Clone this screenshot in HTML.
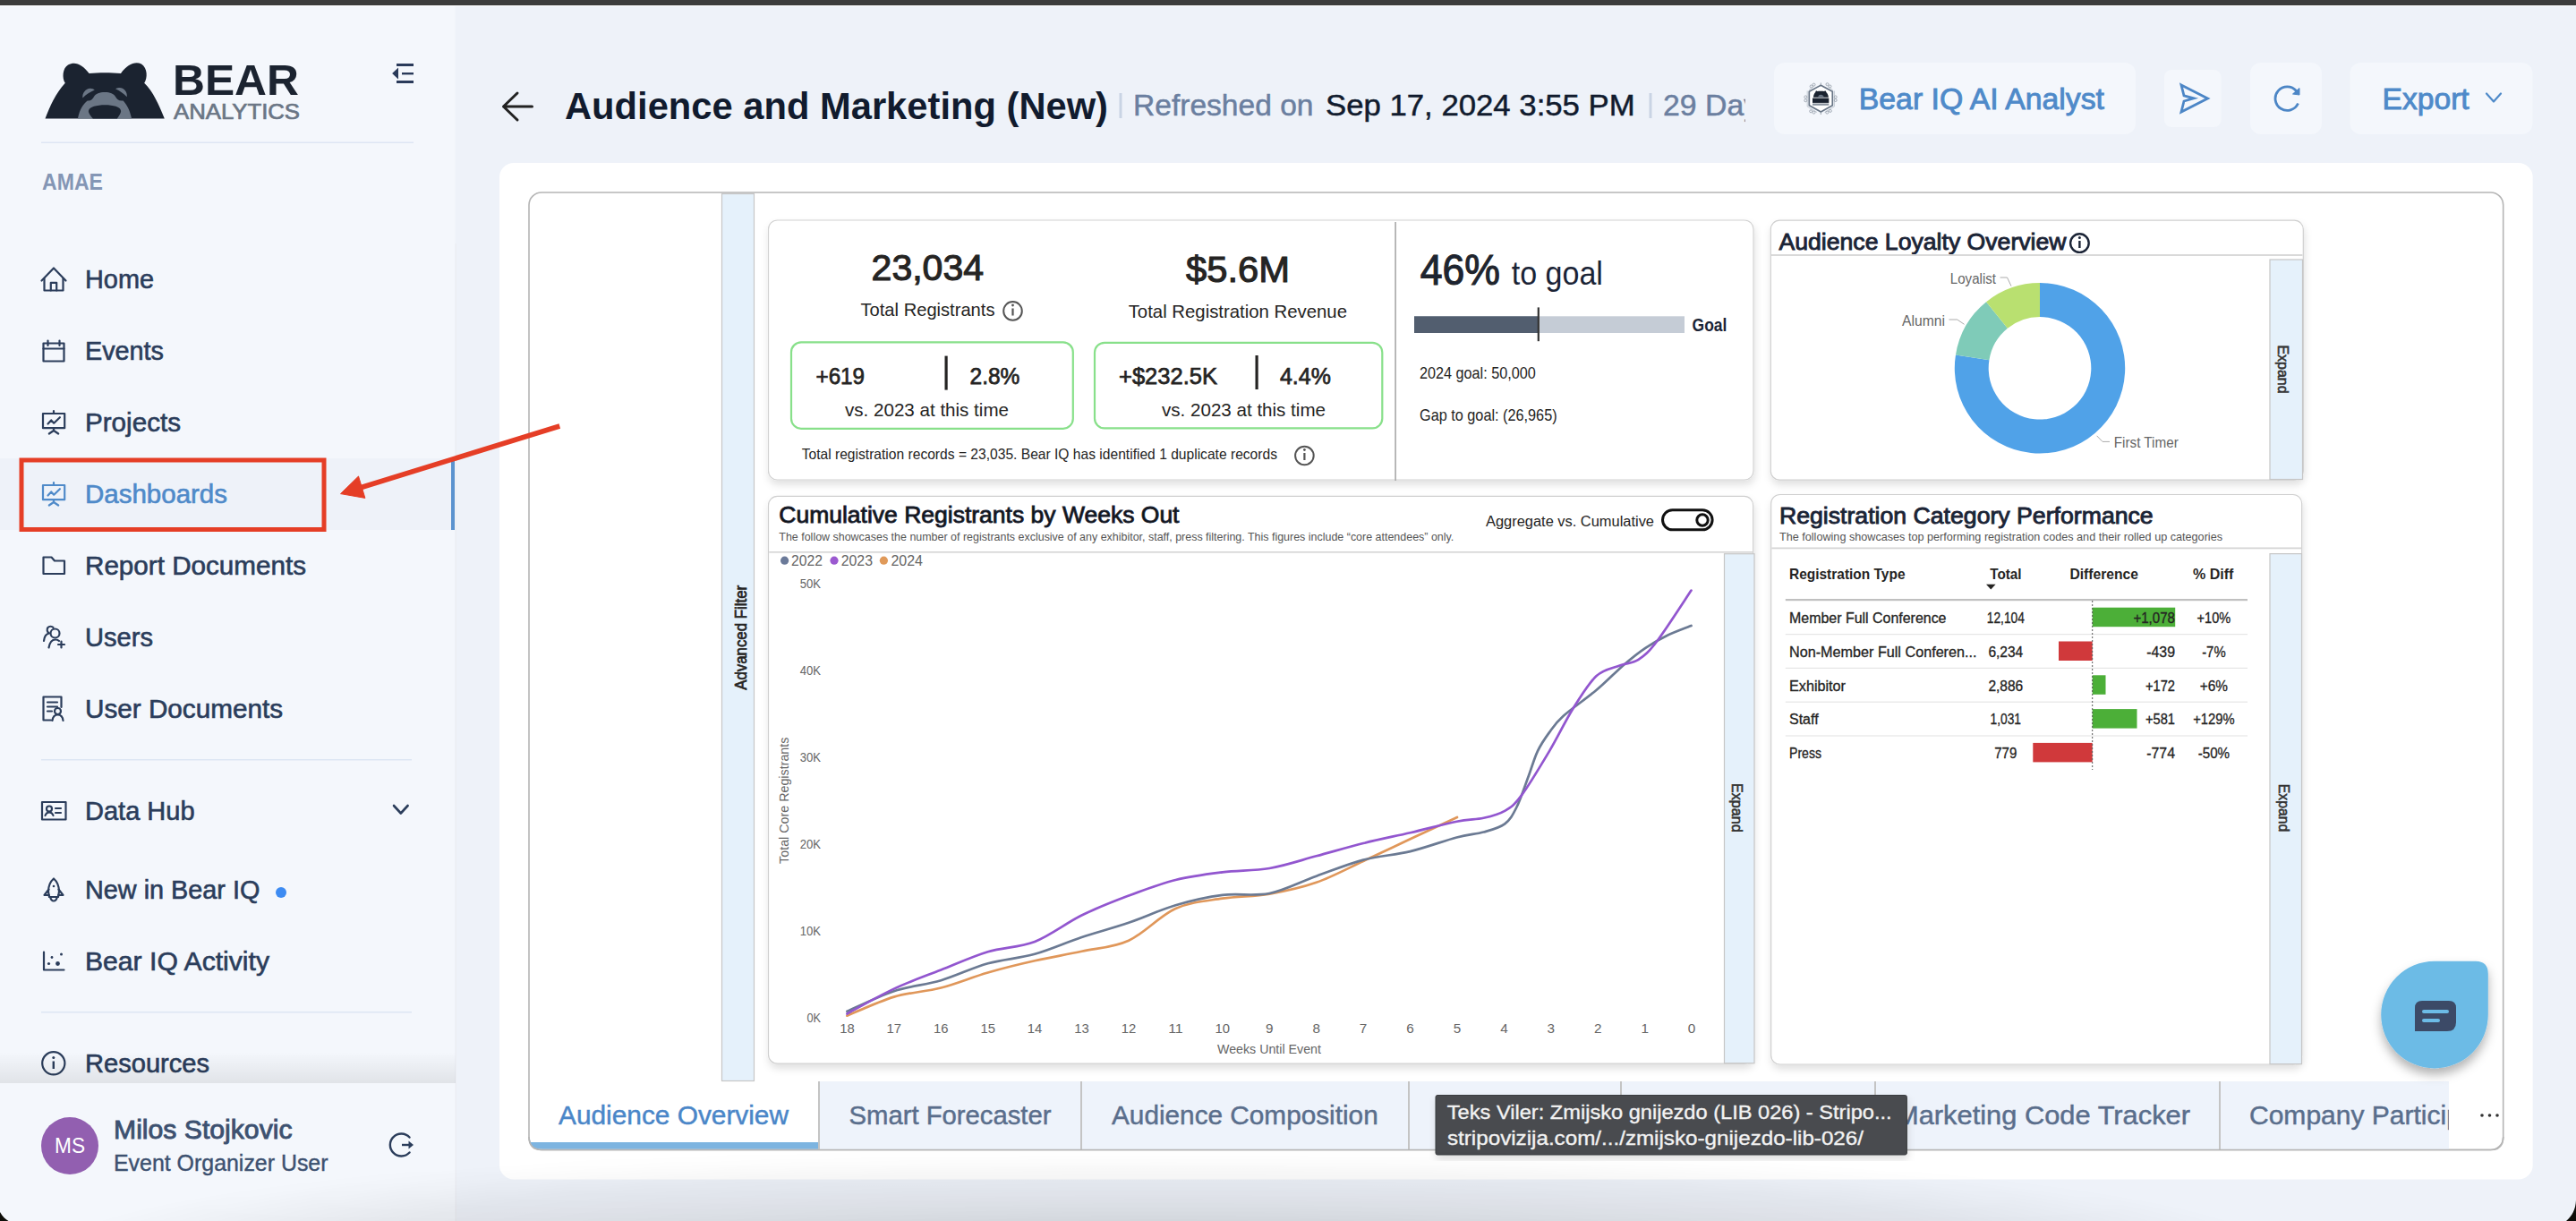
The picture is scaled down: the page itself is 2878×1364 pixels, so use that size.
<!DOCTYPE html>
<html><head><meta charset="utf-8"><title>Audience and Marketing (New)</title>
<style>
html,body{margin:0;padding:0;width:2878px;height:1364px;overflow:hidden;background:#eef2f9}
svg{display:block}
text{font-family:"Liberation Sans", sans-serif}
</style></head><body>
<svg width="2878" height="1364" viewBox="0 0 2878 1364">
<defs>
<filter id="sh" x="-5%" y="-5%" width="110%" height="115%"><feDropShadow dx="1" dy="5" stdDeviation="4" flood-color="#000" flood-opacity="0.12"/></filter>
<filter id="sh2" x="-20%" y="-20%" width="140%" height="150%"><feDropShadow dx="0" dy="7" stdDeviation="6" flood-color="#000" flood-opacity="0.3"/></filter>
<radialGradient id="botg" gradientUnits="userSpaceOnUse" cx="1300" cy="1400" r="1250" gradientTransform="translate(1300,1400) scale(1,0.1) translate(-1300,-1400)"><stop offset="0" stop-color="#000" stop-opacity="0.14"/><stop offset="0.75" stop-color="#000" stop-opacity="0.06"/><stop offset="1" stop-color="#000" stop-opacity="0"/></radialGradient>
<linearGradient id="sideg" x1="0" y1="0" x2="0" y2="1"><stop offset="0" stop-color="#000" stop-opacity="0"/><stop offset="1" stop-color="#000" stop-opacity="0.08"/></linearGradient>
<linearGradient id="vfade" x1="0" y1="0" x2="0" y2="1"><stop offset="0" stop-color="#fff" stop-opacity="0"/><stop offset="0.35" stop-color="#fff" stop-opacity="0.5"/><stop offset="1" stop-color="#fff" stop-opacity="1"/></linearGradient><mask id="vmask" maskUnits="userSpaceOnUse" x="0" y="1280" width="2878" height="84"><rect x="0" y="1280" width="2878" height="84" fill="url(#vfade)"/></mask>
<clipPath id="clipDay"><rect x="1850" y="80" width="100" height="80"/></clipPath>
<clipPath id="clipComp"><rect x="2482" y="1208" width="254" height="77"/></clipPath>
</defs>

<rect x="0" y="0" width="2878" height="1364" fill="#eef2f9"/>
<rect x="0" y="0" width="508.5" height="1364" fill="#f4f7fc"/>
<rect x="508.5" y="272" width="1.5" height="1092" fill="#eceef3"/>
<rect x="0" y="0" width="2878" height="6" fill="#3c3c3c"/>
<rect x="0" y="6" width="2878" height="1" fill="#ffffff"/>
<g transform="translate(40,60)">
<path fill="#1b2330" d="M10.5,72.6 C16,58 22,45 32.8,32.8 C29,27 30,16 36,12.5 C44,8 52,12 59.6,22 C70,21 84,21 95,22 C102,12 111,8 118,11.5 C125,16 125,27 121.2,32.8 C131,42 138,58 143.8,72.6 Z"/>
<path fill="#6b7685" d="M46.9,72.6 C49,62 53,56 57.7,52.4 C61,53 63.5,51 65,48 C67,44.5 71,43 77.3,43 C83,43 87,44.5 89,48 C90.5,51 93,53 97.6,52.4 C101,56 105,62 107.1,72.6 Z"/>
<path fill="#6b7685" d="M52.4,49.5 C51.5,44 56,38.5 61,38.7 C63,38.8 65,39.5 65.8,40.6 C60,43 56,46 52.4,49.5 Z"/>
<path fill="#6b7685" d="M101.8,48.2 C102.5,42 98,37.5 93,37.9 C91,38 89.5,38.6 89,39.3 C94,41.5 98,44.5 101.8,48.2 Z"/>
<path fill="#1b2330" d="M63.9,72.6 C60,68 58.5,65.5 59,63.5 C60,59.5 68,57.3 77.3,57.3 C86.5,57.3 94.5,59.5 95,63.5 C95.5,65.5 94,68 90.8,72.6 Z"/>
</g>
<text x="193.0" y="106.0" font-size="48.9" fill="#1b2330" font-weight="bold" textLength="141.0" lengthAdjust="spacingAndGlyphs">BEAR</text>
<text x="194.0" y="133.0" font-size="24.4" fill="#6b7685" textLength="141.0" lengthAdjust="spacingAndGlyphs" stroke="#6b7685" stroke-width="0.7">ANALYTICS</text>
<g fill="#2a3a5a"><rect x="443" y="71" width="19" height="3"/><rect x="449" y="81" width="13" height="2.4"/><rect x="443" y="90" width="19" height="3"/><path d="M438.1,82 L445,75.5 L445,88.4 Z"/></g>
<rect x="46" y="158.5" width="416" height="1.5" fill="#dde6f4"/>
<text x="47.0" y="212.0" font-size="25.1" fill="#8496b5" font-weight="bold" textLength="68.0" lengthAdjust="spacingAndGlyphs">AMAE</text>
<rect x="0" y="512" width="508" height="80" fill="#eef2f9"/>
<rect x="504" y="515" width="4" height="77" fill="#5b93cf"/>
<text x="95.0" y="322.0" font-size="28.6" fill="#2b3d5b" textLength="77.0" lengthAdjust="spacingAndGlyphs" stroke="#2b3d5b" stroke-width="0.6">Home</text>
<text x="95.0" y="402.0" font-size="28.6" fill="#2b3d5b" textLength="88.0" lengthAdjust="spacingAndGlyphs" stroke="#2b3d5b" stroke-width="0.6">Events</text>
<text x="95.0" y="482.0" font-size="28.6" fill="#2b3d5b" textLength="107.0" lengthAdjust="spacingAndGlyphs" stroke="#2b3d5b" stroke-width="0.6">Projects</text>
<text x="95.0" y="562.0" font-size="28.6" fill="#4f8ac9" textLength="159.0" lengthAdjust="spacingAndGlyphs" stroke="#4f8ac9" stroke-width="0.6">Dashboards</text>
<text x="95.0" y="642.4" font-size="28.6" fill="#2b3d5b" textLength="247.0" lengthAdjust="spacingAndGlyphs" stroke="#2b3d5b" stroke-width="0.6">Report Documents</text>
<text x="95.0" y="721.5" font-size="28.6" fill="#2b3d5b" textLength="76.0" lengthAdjust="spacingAndGlyphs" stroke="#2b3d5b" stroke-width="0.6">Users</text>
<text x="95.0" y="802.0" font-size="28.6" fill="#2b3d5b" textLength="221.0" lengthAdjust="spacingAndGlyphs" stroke="#2b3d5b" stroke-width="0.6">User Documents</text>
<text x="95.0" y="915.8" font-size="28.6" fill="#2b3d5b" textLength="122.6" lengthAdjust="spacingAndGlyphs" stroke="#2b3d5b" stroke-width="0.6">Data Hub</text>
<text x="95.0" y="1004.0" font-size="28.6" fill="#2b3d5b" textLength="195.4" lengthAdjust="spacingAndGlyphs" stroke="#2b3d5b" stroke-width="0.6">New in Bear IQ</text>
<text x="95.0" y="1084.0" font-size="28.6" fill="#2b3d5b" textLength="206.0" lengthAdjust="spacingAndGlyphs" stroke="#2b3d5b" stroke-width="0.6">Bear IQ Activity</text>
<text x="95.0" y="1198.0" font-size="28.6" fill="#2b3d5b" textLength="139.0" lengthAdjust="spacingAndGlyphs" stroke="#2b3d5b" stroke-width="0.6">Resources</text>
<g fill="none" stroke="#2b3d5b" stroke-width="2.2" stroke-linejoin="round" stroke-linecap="round"><path d="M46.5,313.5 L60,299.5 L73.5,313.5"/><path d="M49.5,311 V324.5 H70.5 V311"/><path d="M56.8,324.5 V315.8 H63.2 V324.5"/></g>
<g fill="none" stroke="#2b3d5b" stroke-width="2.2" stroke-linejoin="round" stroke-linecap="round"><rect x="48.5" y="383.5" width="23" height="20"/><path d="M48.5,389.5 H71.5"/><path d="M53.5,380.5 V386 M66.5,380.5 V386"/></g>
<g fill="none" stroke="#2b3d5b" stroke-width="2.2" stroke-linejoin="round" stroke-linecap="round" transform="translate(0,0)"><rect x="48" y="462" width="24.2" height="16.2"/><path d="M60,459 V462"/><path d="M60,478.5 V481 M54.8,484.5 L60,481 L65.2,484.5"/><path d="M53.5,473.5 L57.2,469.4 L60.2,472.7 L66.9,466.2"/></g>
<g fill="none" stroke="#4f8ac9" stroke-width="2.2" stroke-linejoin="round" stroke-linecap="round" transform="translate(0,80)"><rect x="48" y="462" width="24.2" height="16.2"/><path d="M60,459 V462"/><path d="M60,478.5 V481 M54.8,484.5 L60,481 L65.2,484.5"/><path d="M53.5,473.5 L57.2,469.4 L60.2,472.7 L66.9,466.2"/></g>
<g fill="none" stroke="#2b3d5b" stroke-width="2.2" stroke-linejoin="round" stroke-linecap="round"><path d="M48.5,622.5 H57.5 L61,626.5 H72 V641 H48.5 Z"/></g>
<g fill="none" stroke="#2b3d5b" stroke-width="2.2" stroke-linejoin="round" stroke-linecap="round" stroke-width="2"><path d="M49,716 C49.5,711 52,708 55,707.5 C52.5,706 52,703 53.5,701 C55,699.3 58,699.3 59.5,701"/><circle cx="61.5" cy="707.5" r="5"/><path d="M54.5,723.5 C55.5,717.5 58.5,714.5 62,714.5 C63.5,714.5 65,715 66,716"/><path d="M68.5,716.5 V723.5 M65,720 H72"/></g>
<g fill="none" stroke="#2b3d5b" stroke-width="2.2" stroke-linejoin="round" stroke-linecap="round" stroke-width="2"><path d="M57,804.5 H48.5 V778.5 H68.5 V790"/><path d="M53,784.5 H64 M53,789.5 H64 M53,794.5 H58"/><circle cx="64.5" cy="794.5" r="3.5"/><path d="M58.5,805 C59,800.5 61.5,798.5 64.5,798.5 C67.5,798.5 70,800.5 70.5,805"/></g>
<g fill="none" stroke="#2b3d5b" stroke-width="2.2" stroke-linejoin="round" stroke-linecap="round" stroke-width="2"><rect x="47" y="896" width="26.5" height="19.5"/><circle cx="55" cy="903.5" r="3"/><path d="M50.5,911 C51.5,908 53,907.5 55,907.5 C57,907.5 58.5,908 59.5,911"/><path d="M62,903 H68 M62,908 H68"/></g>
<g fill="none" stroke="#2b3d5b" stroke-width="2.2" stroke-linejoin="round" stroke-linecap="round" stroke-width="2"><path d="M60,981.5 C64,985 66,990 66,996 L65,1002 H55 L54,996 C54,990 56,985 60,981.5 Z"/><path d="M54.5,993.5 L49.5,1000 H55 M65.5,993.5 L70.5,1000 H65"/><path d="M56,1002 C57,1005.5 58.5,1006.5 60,1006.5 C61.5,1006.5 63,1005.5 64,1002"/></g>
<circle cx="60" cy="990" r="1.3" fill="#2b3d5b"/>
<g fill="none" stroke="#2b3d5b" stroke-width="2.2" stroke-linejoin="round" stroke-linecap="round" stroke-width="2"><path d="M49,1063.5 V1083.5 H71.5"/></g>
<g fill="#2b3d5b"><circle cx="54.5" cy="1076.5" r="1.6"/><circle cx="58" cy="1069.5" r="1.4"/><circle cx="64.5" cy="1076.5" r="2.4"/><circle cx="68.5" cy="1066" r="1.5"/></g>
<circle cx="314" cy="997" r="6" fill="#3d8bf2"/>
<path d="M440,900 L447.8,908.5 L455.6,900" fill="none" stroke="#2b3d5b" stroke-width="2.6" stroke-linecap="round" stroke-linejoin="round"/>
<rect x="46" y="848" width="414" height="1.5" fill="#dde6f4"/>
<rect x="46" y="1130" width="414" height="1.5" fill="#dde6f4"/>
<circle cx="59.8" cy="1187.8" r="12.6" fill="none" stroke="#2b3d5b" stroke-width="2.2"/>
<rect x="58.6" y="1185.5" width="2.4" height="8.5" fill="#2b3d5b"/><circle cx="59.8" cy="1181.5" r="1.5" fill="#2b3d5b"/>
<rect x="0" y="1175" width="509" height="35" fill="url(#sideg)"/>
<rect x="0" y="1210" width="509" height="154" fill="#f4f7fc"/>
<rect x="508.5" y="1210" width="1.5" height="154" fill="#eceef3"/>
<circle cx="78" cy="1280" r="32" fill="#925fb0"/>
<text x="61.0" y="1288.0" font-size="23.7" fill="#ffffff" textLength="34.0" lengthAdjust="spacingAndGlyphs">MS</text>
<text x="127.0" y="1272.0" font-size="29.3" fill="#3d5170" textLength="199.5" lengthAdjust="spacingAndGlyphs" stroke="#3d5170" stroke-width="0.9">Milos Stojkovic</text>
<text x="127.0" y="1308.0" font-size="25.1" fill="#3d5170" textLength="239.5" lengthAdjust="spacingAndGlyphs" stroke="#3d5170" stroke-width="0.4">Event Organizer User</text>
<path d="M457.5,1270.5 A12.5,12.5 0 1 0 457.5,1287.5" fill="none" stroke="#2b3d5b" stroke-width="2.4" stroke-linecap="round"/>
<path d="M449,1279 H459.5" stroke="#2b3d5b" stroke-width="2.4"/><path d="M462,1279 L456.5,1274.5 V1283.5 Z" fill="#2b3d5b"/>
<path d="M578,104 L562.5,119 L578,134 M562.5,119 H594.5" fill="none" stroke="#222" stroke-width="3" stroke-linecap="round" stroke-linejoin="round"/>
<text x="631.0" y="132.5" font-size="41.9" fill="#111b2e" font-weight="bold" textLength="607.0" lengthAdjust="spacingAndGlyphs">Audience and Marketing (New)</text>
<rect x="1250.5" y="104" width="3" height="28" fill="#c9d4e4"/>
<text x="1266.0" y="129.0" font-size="33.5" fill="#6b7fa0" textLength="201.5" lengthAdjust="spacingAndGlyphs" stroke="#6b7fa0" stroke-width="0.5">Refreshed on</text>
<text x="1481.0" y="129.0" font-size="33.5" fill="#111b2e" textLength="345.7" lengthAdjust="spacingAndGlyphs" stroke="#111b2e" stroke-width="0.5">Sep 17, 2024 3:55 PM</text>
<rect x="1842.5" y="104" width="3" height="28" fill="#c9d4e4"/>
<g clip-path="url(#clipDay)">
<text x="1858.0" y="129.0" font-size="33.5" fill="#6b7fa0" textLength="124.0" lengthAdjust="spacingAndGlyphs" stroke="#6b7fa0" stroke-width="0.5">29 Days</text>
</g>
<rect x="1982" y="70" width="404" height="80" rx="12" fill="#f4f7fc"/>
<rect x="2418" y="78" width="63.5" height="64" rx="8" fill="#f4f7fc"/>
<rect x="2514" y="70" width="80" height="80" rx="12" fill="#f4f7fc"/>
<rect x="2625.5" y="70" width="204" height="80" rx="12" fill="#f4f7fc"/>
<g>
<path d="M2019.2,101.5 V119 M2049.4,101.5 V119 M2019.2,119 L2030,125.5 M2049.4,119 L2038.6,125.5 M2021,100.5 L2026.5,96.5 M2047.6,100.5 L2042,96.5" fill="none" stroke="#c3cad3" stroke-width="1"/>
<path d="M2034.3,95.2 L2047.3,102.2 L2047.3,117.8 L2034.3,125 L2021.3,117.8 L2021.3,102.2 Z" fill="#fff" stroke="#687585" stroke-width="1.7"/>
<circle cx="2023.6" cy="96.5" r="1.5" fill="none" stroke="#9aa3ae" stroke-width="0.9"/>
<circle cx="2026.5" cy="94.6" r="1.5" fill="none" stroke="#9aa3ae" stroke-width="0.9"/>
<circle cx="2041.5" cy="94.2" r="1.5" fill="none" stroke="#9aa3ae" stroke-width="0.9"/>
<circle cx="2044.5" cy="96.5" r="1.5" fill="none" stroke="#9aa3ae" stroke-width="0.9"/>
<circle cx="2017.3" cy="108.4" r="1.5" fill="none" stroke="#9aa3ae" stroke-width="0.9"/>
<circle cx="2017.3" cy="112.3" r="1.5" fill="none" stroke="#9aa3ae" stroke-width="0.9"/>
<circle cx="2050.7" cy="108.4" r="1.5" fill="none" stroke="#9aa3ae" stroke-width="0.9"/>
<circle cx="2050.7" cy="112" r="1.5" fill="none" stroke="#9aa3ae" stroke-width="0.9"/>
<circle cx="2023.2" cy="124.3" r="1.5" fill="none" stroke="#9aa3ae" stroke-width="0.9"/>
<circle cx="2026.5" cy="125.6" r="1.5" fill="none" stroke="#9aa3ae" stroke-width="0.9"/>
<circle cx="2041.3" cy="125.6" r="1.5" fill="none" stroke="#9aa3ae" stroke-width="0.9"/>
<circle cx="2044.8" cy="123.9" r="1.5" fill="none" stroke="#9aa3ae" stroke-width="0.9"/>
<path d="M2034.3,92.5 V95 M2034.3,125.5 V128" stroke="#9aa3ae" stroke-width="1"/>
<path fill="#1b2330" d="M2025.9,108.8 C2026.3,105.5 2027.3,103.8 2028.4,103 C2028,101.8 2029.5,101 2030.3,101.9 C2032.5,101.6 2036,101.6 2038.2,101.9 C2039,101 2040.6,101.8 2040.2,103 C2041.3,103.8 2042.5,105.5 2042.9,108.8 Z"/>
<path fill="#6b7685" d="M2031,108.8 C2031.5,106.5 2033,105.8 2034.4,105.8 C2035.8,105.8 2037.3,106.5 2037.8,108.8 Z"/>
<rect x="2025" y="109.6" width="18.3" height="5.3" fill="#1b2330"/><rect x="2025" y="115.5" width="18.3" height="2.3" fill="#8a939e"/>
</g>
<text x="2076.8" y="121.8" font-size="33.5" fill="#4f8ac9" textLength="274.2" lengthAdjust="spacingAndGlyphs" stroke="#4f8ac9" stroke-width="0.9">Bear IQ AI Analyst</text>
<path d="M2437,95 L2466.5,110 L2437,125 L2440,113 L2451,109.8 L2440,106.8 Z" fill="none" stroke="#4c86c6" stroke-width="2.8" stroke-linejoin="miter"/>
<path d="M2567.5,115.5 A13.3,13.3 0 1 1 2565.5,101.5" fill="none" stroke="#4c86c6" stroke-width="2.8"/>
<path d="M2569,98.5 L2569,106 L2561.5,105 Z" fill="#4c86c6" stroke="#4c86c6" stroke-width="1" stroke-linejoin="round"/>
<text x="2661.5" y="121.8" font-size="33.5" fill="#4f8ac9" textLength="97.2" lengthAdjust="spacingAndGlyphs" stroke="#4f8ac9" stroke-width="0.9">Export</text>
<path d="M2778,104.5 L2786,113.5 L2794,104.5" fill="none" stroke="#4f8ac9" stroke-width="2.2" stroke-linecap="round" stroke-linejoin="round"/>
<rect x="558" y="182" width="2271.7" height="1135.5" rx="16" fill="#ffffff"/>
<rect x="591" y="215" width="2205.7" height="1069.5" rx="14" fill="#ffffff" stroke="#b5b5b5" stroke-width="1.6"/>
<rect x="806.5" y="216.5" width="36" height="991" fill="#e5f1fb" stroke="#c6c6c6" stroke-width="1.2"/>
<text transform="translate(833.5,770.8) rotate(-90)" font-size="18" fill="#252423" stroke="#252423" stroke-width="0.7" textLength="117" lengthAdjust="spacingAndGlyphs">Advanced Filter</text>
<rect x="858.5" y="246" width="1100.5" height="290" rx="10" fill="#fff" stroke="#d2d2d2" stroke-width="1.2" filter="url(#sh)"/>
<rect x="1558.3" y="248" width="1.6" height="289" fill="#a8a8a8"/>
<text x="973.6" y="312.7" font-size="40.5" fill="#252423" textLength="125.4" lengthAdjust="spacingAndGlyphs" stroke="#252423" stroke-width="1.1">23,034</text>
<text x="961.5" y="353.0" font-size="20.3" fill="#252423" textLength="150.0" lengthAdjust="spacingAndGlyphs">Total Registrants</text>
<circle cx="1131.5" cy="347.4" r="10.3" fill="none" stroke="#555" stroke-width="2"/><rect x="1130.4" y="344.5" width="2.2" height="8" fill="#555"/><circle cx="1131.5" cy="341" r="1.4" fill="#555"/>
<rect x="884" y="382.4" width="314.8" height="96.4" rx="11" fill="none" stroke="#88e08a" stroke-width="2.2"/>
<text x="911.5" y="429.4" font-size="26.5" fill="#252423" textLength="54.5" lengthAdjust="spacingAndGlyphs" stroke="#252423" stroke-width="0.75">+619</text>
<rect x="1055.5" y="397.6" width="3.2" height="38" fill="#252423"/>
<text x="1083.6" y="429.4" font-size="26.5" fill="#252423" textLength="55.8" lengthAdjust="spacingAndGlyphs" stroke="#252423" stroke-width="0.75">2.8%</text>
<text x="944.0" y="465.0" font-size="20.9" fill="#252423" textLength="183.0" lengthAdjust="spacingAndGlyphs">vs. 2023 at this time</text>
<text x="895.7" y="513.3" font-size="16.5" fill="#252423" textLength="531.3" lengthAdjust="spacingAndGlyphs">Total registration records = 23,035. Bear IQ has identified 1 duplicate records</text>
<circle cx="1457.4" cy="509" r="10.3" fill="none" stroke="#555" stroke-width="2"/><rect x="1456.3" y="506" width="2.2" height="8" fill="#555"/><circle cx="1457.4" cy="502.5" r="1.4" fill="#555"/>
<text x="1325.0" y="314.5" font-size="40.5" fill="#252423" textLength="116.0" lengthAdjust="spacingAndGlyphs" stroke="#252423" stroke-width="1.1">$5.6M</text>
<text x="1260.7" y="355.0" font-size="20.3" fill="#252423" textLength="244.3" lengthAdjust="spacingAndGlyphs">Total Registration Revenue</text>
<rect x="1223" y="382.8" width="321.3" height="95.6" rx="11" fill="none" stroke="#88e08a" stroke-width="2.2"/>
<text x="1250.0" y="428.8" font-size="26.5" fill="#252423" textLength="110.0" lengthAdjust="spacingAndGlyphs" stroke="#252423" stroke-width="0.75">+$232.5K</text>
<rect x="1402.5" y="397" width="3.2" height="38" fill="#252423"/>
<text x="1430.0" y="428.8" font-size="26.5" fill="#252423" textLength="56.8" lengthAdjust="spacingAndGlyphs" stroke="#252423" stroke-width="0.75">4.4%</text>
<text x="1298.0" y="465.0" font-size="20.9" fill="#252423" textLength="183.0" lengthAdjust="spacingAndGlyphs">vs. 2023 at this time</text>
<text x="1586.8" y="317.6" font-size="47.5" fill="#1b2436" textLength="89.2" lengthAdjust="spacingAndGlyphs" stroke="#252423" stroke-width="1.1">46%</text>
<text x="1688.7" y="317.6" font-size="37.0" fill="#1b2436" textLength="102.2" lengthAdjust="spacingAndGlyphs">to goal</text>
<rect x="1580" y="353.3" width="302" height="18.7" fill="#c5ccd6"/>
<rect x="1580" y="353.3" width="138.8" height="18.7" fill="#525e6f"/>
<rect x="1717.7" y="343.4" width="2.2" height="37.8" fill="#333"/>
<text x="1890.6" y="370.4" font-size="19.6" fill="#1b2436" font-weight="bold" textLength="38.8" lengthAdjust="spacingAndGlyphs">Goal</text>
<text x="1586.0" y="422.5" font-size="18.2" fill="#252423" textLength="129.7" lengthAdjust="spacingAndGlyphs">2024 goal: 50,000</text>
<text x="1586.0" y="470.0" font-size="18.2" fill="#252423" textLength="153.6" lengthAdjust="spacingAndGlyphs">Gap to goal: (26,965)</text>
<rect x="1978.3" y="246.2" width="595" height="290" rx="10" fill="#fff" stroke="#cfcfcf" stroke-width="1.2" filter="url(#sh)"/>
<text x="1987.5" y="279.0" font-size="25.1" fill="#1b2436" textLength="321.0" lengthAdjust="spacingAndGlyphs" stroke="#1b2436" stroke-width="0.85">Audience Loyalty Overview</text>
<circle cx="2323.4" cy="271.6" r="10.3" fill="none" stroke="#1b2436" stroke-width="2.4"/><rect x="2322.2" y="269" width="2.4" height="8" fill="#1b2436"/><circle cx="2323.4" cy="265.5" r="1.5" fill="#1b2436"/>
<rect x="1979" y="284" width="593.5" height="2" fill="#d9d9d9" transform="translate(0,0)"/>
<rect x="2536" y="290" width="36.5" height="245.5" fill="#e5f1fb" stroke="#c6c6c6" stroke-width="1.2"/>
<text transform="translate(2545,385.4) rotate(90)" font-size="17" fill="#333" stroke="#333" stroke-width="0.6" textLength="54.2" lengthAdjust="spacingAndGlyphs">Expand</text>
<path d="M2279.00,316.10 A95.2,95.2 0 1 1 2184.97,396.41 L2222.41,402.34 A57.3,57.3 0 1 0 2279.00,354.00 Z" fill="#50a2e8"/>
<path d="M2184.97,396.41 A95.2,95.2 0 0 1 2219.09,337.32 L2242.94,366.77 A57.3,57.3 0 0 0 2222.41,402.34 Z" fill="#7fcbb8"/>
<path d="M2219.09,337.32 A95.2,95.2 0 0 1 2279.00,316.10 L2279.00,354.00 A57.3,57.3 0 0 0 2242.94,366.77 Z" fill="#b9e070"/>
<text x="2178.8" y="317.0" font-size="15.8" fill="#666666" textLength="51.2" lengthAdjust="spacingAndGlyphs">Loyalist</text>
<text x="2125.0" y="363.6" font-size="15.8" fill="#666666" textLength="48.0" lengthAdjust="spacingAndGlyphs">Alumni</text>
<text x="2361.7" y="500.0" font-size="15.8" fill="#666666" textLength="72.1" lengthAdjust="spacingAndGlyphs">First Timer</text>
<path d="M2234.6,310 H2242.5 L2247,319.6 M2177.5,357 H2186.7 L2194.5,362.3 M2342.6,486.8 L2349,493.4 H2357" fill="none" stroke="#aaaaaa" stroke-width="1"/>
<rect x="858.5" y="554.4" width="1100.2" height="633.8" rx="10" fill="#fff" stroke="#cfcfcf" stroke-width="1.2" filter="url(#sh)"/>
<text x="870.3" y="583.8" font-size="25.1" fill="#111111" textLength="447.2" lengthAdjust="spacingAndGlyphs" stroke="#1b2436" stroke-width="0.85">Cumulative Registrants by Weeks Out</text>
<text x="870.3" y="604.0" font-size="13.0" fill="#555555" textLength="754.0" lengthAdjust="spacingAndGlyphs">The follow showcases the number of registrants exclusive of any exhibitor, staff, press filtering. This figures include “core attendees” only.</text>
<text x="1660.0" y="588.3" font-size="17.3" fill="#252423" textLength="188.0" lengthAdjust="spacingAndGlyphs">Aggregate vs. Cumulative</text>
<rect x="1857.5" y="569.8" width="55.6" height="22" rx="11" fill="#fff" stroke="#111" stroke-width="3"/>
<circle cx="1902" cy="581" r="6.2" fill="#fff" stroke="#111" stroke-width="3"/>
<rect x="859.2" y="616" width="1099" height="1.6" fill="#d5d5d5"/>
<rect x="1926.5" y="618.7" width="33.5" height="569" fill="#e5f1fb" stroke="#c6c6c6" stroke-width="1.2"/>
<text transform="translate(1934.5,875) rotate(90)" font-size="17" fill="#333" stroke="#333" stroke-width="0.6" textLength="54.7" lengthAdjust="spacingAndGlyphs">Expand</text>
<circle cx="876.6" cy="626.2" r="4.6" fill="#6b7a99"/><circle cx="932" cy="626.2" r="4.6" fill="#9b59d0"/><circle cx="987.4" cy="626.2" r="4.6" fill="#e09a5a"/>
<text x="884.0" y="632.0" font-size="16.2" fill="#666666" textLength="35.0" lengthAdjust="spacingAndGlyphs">2022</text>
<text x="939.7" y="632.0" font-size="16.2" fill="#666666" textLength="35.3" lengthAdjust="spacingAndGlyphs">2023</text>
<text x="995.4" y="632.0" font-size="16.2" fill="#666666" textLength="35.6" lengthAdjust="spacingAndGlyphs">2024</text>
<text x="917.0" y="657.2" font-size="14.2" fill="#666666" text-anchor="end" textLength="23.3" lengthAdjust="spacingAndGlyphs">50K</text>
<text x="917.0" y="754.3" font-size="14.2" fill="#666666" text-anchor="end" textLength="23.3" lengthAdjust="spacingAndGlyphs">40K</text>
<text x="917.0" y="851.0" font-size="14.2" fill="#666666" text-anchor="end" textLength="23.3" lengthAdjust="spacingAndGlyphs">30K</text>
<text x="917.0" y="948.0" font-size="14.2" fill="#666666" text-anchor="end" textLength="23.3" lengthAdjust="spacingAndGlyphs">20K</text>
<text x="917.0" y="1045.0" font-size="14.2" fill="#666666" text-anchor="end" textLength="23.3" lengthAdjust="spacingAndGlyphs">10K</text>
<text x="917.0" y="1142.3" font-size="14.2" fill="#666666" text-anchor="end" textLength="15.6" lengthAdjust="spacingAndGlyphs">0K</text>
<text transform="translate(881,964.9) rotate(-90)" font-size="15" fill="#666" textLength="141.3" lengthAdjust="spacingAndGlyphs">Total Core Registrants</text>
<text x="946.4" y="1154.3" font-size="14.2" fill="#666666" text-anchor="middle" textLength="16.5" lengthAdjust="spacingAndGlyphs">18</text>
<text x="998.8" y="1154.3" font-size="14.2" fill="#666666" text-anchor="middle" textLength="16.5" lengthAdjust="spacingAndGlyphs">17</text>
<text x="1051.3" y="1154.3" font-size="14.2" fill="#666666" text-anchor="middle" textLength="16.5" lengthAdjust="spacingAndGlyphs">16</text>
<text x="1103.7" y="1154.3" font-size="14.2" fill="#666666" text-anchor="middle" textLength="16.5" lengthAdjust="spacingAndGlyphs">15</text>
<text x="1156.1" y="1154.3" font-size="14.2" fill="#666666" text-anchor="middle" textLength="16.5" lengthAdjust="spacingAndGlyphs">14</text>
<text x="1208.5" y="1154.3" font-size="14.2" fill="#666666" text-anchor="middle" textLength="16.5" lengthAdjust="spacingAndGlyphs">13</text>
<text x="1261.0" y="1154.3" font-size="14.2" fill="#666666" text-anchor="middle" textLength="16.5" lengthAdjust="spacingAndGlyphs">12</text>
<text x="1313.4" y="1154.3" font-size="14.2" fill="#666666" text-anchor="middle" textLength="16.5" lengthAdjust="spacingAndGlyphs">11</text>
<text x="1365.8" y="1154.3" font-size="14.2" fill="#666666" text-anchor="middle" textLength="16.5" lengthAdjust="spacingAndGlyphs">10</text>
<text x="1418.3" y="1154.3" font-size="14.2" fill="#666666" text-anchor="middle" textLength="8.5" lengthAdjust="spacingAndGlyphs">9</text>
<text x="1470.7" y="1154.3" font-size="14.2" fill="#666666" text-anchor="middle" textLength="8.5" lengthAdjust="spacingAndGlyphs">8</text>
<text x="1523.1" y="1154.3" font-size="14.2" fill="#666666" text-anchor="middle" textLength="8.5" lengthAdjust="spacingAndGlyphs">7</text>
<text x="1575.6" y="1154.3" font-size="14.2" fill="#666666" text-anchor="middle" textLength="8.5" lengthAdjust="spacingAndGlyphs">6</text>
<text x="1628.0" y="1154.3" font-size="14.2" fill="#666666" text-anchor="middle" textLength="8.5" lengthAdjust="spacingAndGlyphs">5</text>
<text x="1680.4" y="1154.3" font-size="14.2" fill="#666666" text-anchor="middle" textLength="8.5" lengthAdjust="spacingAndGlyphs">4</text>
<text x="1732.8" y="1154.3" font-size="14.2" fill="#666666" text-anchor="middle" textLength="8.5" lengthAdjust="spacingAndGlyphs">3</text>
<text x="1785.3" y="1154.3" font-size="14.2" fill="#666666" text-anchor="middle" textLength="8.5" lengthAdjust="spacingAndGlyphs">2</text>
<text x="1837.7" y="1154.3" font-size="14.2" fill="#666666" text-anchor="middle" textLength="8.5" lengthAdjust="spacingAndGlyphs">1</text>
<text x="1890.1" y="1154.3" font-size="14.2" fill="#666666" text-anchor="middle" textLength="8.5" lengthAdjust="spacingAndGlyphs">0</text>
<text x="1360.0" y="1177.0" font-size="14.7" fill="#666666" textLength="116.0" lengthAdjust="spacingAndGlyphs">Weeks Until Event</text>
<path d="M946.4,1134.7 C955.1,1131.2 981.4,1118.8 998.8,1113.6 C1016.3,1108.4 1033.8,1108.0 1051.3,1103.5 C1068.7,1099.0 1086.2,1091.5 1103.7,1086.5 C1121.2,1081.5 1138.6,1077.2 1156.1,1073.3 C1173.6,1069.3 1191.1,1066.6 1208.5,1062.8 C1226.0,1059.0 1243.5,1058.7 1261.0,1050.7 C1278.5,1042.7 1295.9,1022.8 1313.4,1015.0 C1330.9,1007.2 1348.4,1006.4 1365.8,1003.7 C1383.3,1001.0 1400.8,1001.6 1418.3,998.6 C1435.7,995.6 1453.2,991.9 1470.7,985.8 C1488.2,979.7 1505.7,970.1 1523.1,962.0 C1540.6,953.9 1558.1,945.5 1575.6,937.3 C1593.0,929.1 1619.3,917.0 1628.0,913.0" fill="none" stroke="#e0975a" stroke-width="2.7" stroke-linecap="round"/>
<path d="M946.4,1129.8 C955.1,1126.0 981.4,1113.0 998.8,1107.2 C1016.3,1101.4 1033.8,1100.4 1051.3,1095.2 C1068.7,1090.0 1086.2,1081.2 1103.7,1076.3 C1121.2,1071.4 1138.6,1070.7 1156.1,1065.8 C1173.6,1060.9 1191.1,1052.8 1208.5,1047.0 C1226.0,1041.2 1243.5,1036.8 1261.0,1030.8 C1278.5,1024.8 1295.9,1016.4 1313.4,1011.2 C1330.9,1006.1 1348.4,1002.1 1365.8,999.9 C1383.3,997.7 1400.8,1001.5 1418.3,998.0 C1435.7,994.5 1453.2,984.9 1470.7,978.7 C1488.2,972.5 1505.7,965.2 1523.1,960.6 C1540.6,956.0 1558.2,955.3 1575.6,951.1 C1593.0,946.9 1613.8,939.1 1627.5,935.5 C1641.2,931.9 1648.6,932.0 1657.6,929.5 C1666.5,927.0 1675.1,924.9 1681.2,920.3 C1687.3,915.7 1689.9,910.7 1694.3,902.0 C1698.7,893.3 1703.5,878.5 1707.4,868.0 C1711.3,857.5 1714.0,847.4 1717.9,839.1 C1721.8,830.8 1726.2,824.7 1731.0,818.1 C1735.8,811.5 1738.0,807.6 1746.7,799.8 C1755.4,791.9 1772.1,780.6 1783.4,771.0 C1794.8,761.4 1805.6,750.1 1814.8,742.2 C1824.0,734.3 1830.5,729.1 1838.4,723.8 C1846.3,718.5 1853.5,714.3 1862.0,710.2 C1870.5,706.1 1884.9,700.9 1889.5,699.0" fill="none" stroke="#6b7a93" stroke-width="2.7" stroke-linecap="round"/>
<path d="M946.4,1132.5 C955.1,1127.8 981.4,1112.8 998.8,1104.6 C1016.3,1096.4 1033.8,1090.4 1051.3,1083.5 C1068.7,1076.6 1086.2,1068.5 1103.7,1063.2 C1121.2,1057.9 1138.6,1058.7 1156.1,1051.9 C1173.6,1045.1 1191.1,1031.0 1208.5,1022.5 C1226.0,1014.0 1243.5,1007.2 1261.0,1000.6 C1278.5,994.0 1295.9,987.4 1313.4,983.0 C1330.9,978.6 1348.4,976.5 1365.8,974.3 C1383.3,972.1 1400.8,973.0 1418.3,970.0 C1435.7,967.0 1453.2,961.0 1470.7,956.3 C1488.2,951.6 1505.7,946.4 1523.1,942.0 C1540.6,937.6 1558.2,934.2 1575.6,930.2 C1593.0,926.2 1613.8,920.4 1627.5,917.7 C1641.2,915.0 1648.6,915.8 1657.6,913.8 C1666.5,911.8 1674.2,910.0 1681.2,905.9 C1688.2,901.8 1691.3,900.0 1699.6,888.9 C1707.9,877.8 1721.4,855.2 1731.0,839.1 C1740.6,823.0 1748.5,806.0 1757.2,792.0 C1765.9,778.0 1774.7,763.4 1783.4,755.3 C1792.1,747.2 1801.8,746.6 1809.6,743.5 C1817.4,740.4 1823.5,741.5 1830.5,736.9 C1837.5,732.3 1841.7,728.9 1851.5,716.0 C1861.3,703.1 1883.2,669.0 1889.5,659.6" fill="none" stroke="#9256cf" stroke-width="2.7" stroke-linecap="round"/>
<rect x="1978.7" y="552.5" width="593" height="636.5" rx="10" fill="#fff" stroke="#cfcfcf" stroke-width="1.2" filter="url(#sh)"/>
<text x="1987.9" y="584.6" font-size="25.1" fill="#1b2436" textLength="417.8" lengthAdjust="spacingAndGlyphs" stroke="#1b2436" stroke-width="0.85">Registration Category Performance</text>
<text x="1988.0" y="604.0" font-size="13.0" fill="#555555" textLength="495.0" lengthAdjust="spacingAndGlyphs">The following showcases top performing registration codes and their rolled up categories</text>
<rect x="1979.4" y="611.5" width="591.6" height="1.8" fill="#d5d5d5"/>
<rect x="2536" y="618.6" width="35.5" height="570" fill="#e5f1fb" stroke="#c6c6c6" stroke-width="1.2"/>
<text transform="translate(2545.5,875.7) rotate(90)" font-size="17" fill="#333" stroke="#333" stroke-width="0.6" textLength="53.6" lengthAdjust="spacingAndGlyphs">Expand</text>
<text x="1999.0" y="647.2" font-size="16.3" fill="#252423" font-weight="bold" textLength="129.5" lengthAdjust="spacingAndGlyphs">Registration Type</text>
<text x="2223.2" y="647.2" font-size="16.3" fill="#252423" font-weight="bold" textLength="35.4" lengthAdjust="spacingAndGlyphs">Total</text>
<text x="2312.4" y="647.2" font-size="16.3" fill="#252423" font-weight="bold" textLength="76.6" lengthAdjust="spacingAndGlyphs">Difference</text>
<text x="2450.0" y="647.2" font-size="16.3" fill="#252423" font-weight="bold" textLength="45.4" lengthAdjust="spacingAndGlyphs">% Diff</text>
<path d="M2219,652.8 L2229.6,652.8 L2224.3,658.4 Z" fill="#252423"/>
<rect x="1994.8" y="669" width="516.2" height="2.2" fill="#c0c0c0"/>
<rect x="1994.8" y="708.0" width="516.2" height="1.2" fill="#e6e6e6"/>
<rect x="2337.7" y="678.7" width="92.5" height="21.5" fill="#4caf38"/>
<text x="1999.0" y="696.0" font-size="15.6" fill="#252423" textLength="175.5" lengthAdjust="spacingAndGlyphs" stroke="#252423" stroke-width="0.3">Member Full Conference</text>
<text x="2240.8" y="696.0" font-size="15.6" fill="#252423" text-anchor="middle" textLength="42.1" lengthAdjust="spacingAndGlyphs" stroke="#252423" stroke-width="0.3">12,104</text>
<text x="2430.0" y="696.0" font-size="15.6" fill="#252423" text-anchor="end" textLength="46.6" lengthAdjust="spacingAndGlyphs" stroke="#252423" stroke-width="0.3">+1,078</text>
<text x="2473.4" y="696.0" font-size="15.6" fill="#252423" text-anchor="middle" textLength="37.6" lengthAdjust="spacingAndGlyphs" stroke="#252423" stroke-width="0.3">+10%</text>
<rect x="1994.8" y="745.8" width="516.2" height="1.2" fill="#e6e6e6"/>
<rect x="2300.0" y="716.5" width="37.7" height="21.5" fill="#d0393b"/>
<text x="1999.0" y="733.8" font-size="15.6" fill="#252423" textLength="209.5" lengthAdjust="spacingAndGlyphs" stroke="#252423" stroke-width="0.3">Non-Member Full Conferen...</text>
<text x="2240.8" y="733.8" font-size="15.6" fill="#252423" text-anchor="middle" textLength="38.8" lengthAdjust="spacingAndGlyphs" stroke="#252423" stroke-width="0.3">6,234</text>
<text x="2430.0" y="733.8" font-size="15.6" fill="#252423" text-anchor="end" textLength="31.8" lengthAdjust="spacingAndGlyphs" stroke="#252423" stroke-width="0.3">-439</text>
<text x="2473.4" y="733.8" font-size="15.6" fill="#252423" text-anchor="middle" textLength="26.5" lengthAdjust="spacingAndGlyphs" stroke="#252423" stroke-width="0.3">-7%</text>
<rect x="1994.8" y="783.6" width="516.2" height="1.2" fill="#e6e6e6"/>
<rect x="2337.7" y="754.3" width="14.8" height="21.5" fill="#4caf38"/>
<text x="1999.0" y="771.6" font-size="15.6" fill="#252423" textLength="63.0" lengthAdjust="spacingAndGlyphs" stroke="#252423" stroke-width="0.3">Exhibitor</text>
<text x="2240.8" y="771.6" font-size="15.6" fill="#252423" text-anchor="middle" textLength="38.8" lengthAdjust="spacingAndGlyphs" stroke="#252423" stroke-width="0.3">2,886</text>
<text x="2430.0" y="771.6" font-size="15.6" fill="#252423" text-anchor="end" textLength="33.0" lengthAdjust="spacingAndGlyphs" stroke="#252423" stroke-width="0.3">+172</text>
<text x="2473.4" y="771.6" font-size="15.6" fill="#252423" text-anchor="middle" textLength="31.2" lengthAdjust="spacingAndGlyphs" stroke="#252423" stroke-width="0.3">+6%</text>
<rect x="1994.8" y="821.4" width="516.2" height="1.2" fill="#e6e6e6"/>
<rect x="2337.7" y="792.1" width="49.8" height="21.5" fill="#4caf38"/>
<text x="1999.0" y="809.4" font-size="15.6" fill="#252423" textLength="32.6" lengthAdjust="spacingAndGlyphs" stroke="#252423" stroke-width="0.3">Staff</text>
<text x="2240.8" y="809.4" font-size="15.6" fill="#252423" text-anchor="middle" textLength="34.5" lengthAdjust="spacingAndGlyphs" stroke="#252423" stroke-width="0.3">1,031</text>
<text x="2430.0" y="809.4" font-size="15.6" fill="#252423" text-anchor="end" textLength="33.0" lengthAdjust="spacingAndGlyphs" stroke="#252423" stroke-width="0.3">+581</text>
<text x="2473.4" y="809.4" font-size="15.6" fill="#252423" text-anchor="middle" textLength="46.3" lengthAdjust="spacingAndGlyphs" stroke="#252423" stroke-width="0.3">+129%</text>
<rect x="2271.3" y="829.9" width="66.4" height="21.5" fill="#d0393b"/>
<text x="1999.0" y="847.2" font-size="15.6" fill="#252423" textLength="36.0" lengthAdjust="spacingAndGlyphs" stroke="#252423" stroke-width="0.3">Press</text>
<text x="2240.8" y="847.2" font-size="15.6" fill="#252423" text-anchor="middle" textLength="25.1" lengthAdjust="spacingAndGlyphs" stroke="#252423" stroke-width="0.3">779</text>
<text x="2430.0" y="847.2" font-size="15.6" fill="#252423" text-anchor="end" textLength="31.8" lengthAdjust="spacingAndGlyphs" stroke="#252423" stroke-width="0.3">-774</text>
<text x="2473.4" y="847.2" font-size="15.6" fill="#252423" text-anchor="middle" textLength="35.4" lengthAdjust="spacingAndGlyphs" stroke="#252423" stroke-width="0.3">-50%</text>
<path d="M2337.7,671 V860" stroke="#555" stroke-width="1" stroke-dasharray="2,2"/>
<rect x="915" y="1208" width="1821" height="76" fill="#eef3fb"/>
<path d="M592,1276 H915 V1283.8 H606 Q592,1283.8 592,1272 Z" fill="#7db4e0"/>
<rect x="914" y="1208" width="2" height="77" fill="#c4c4c4"/>
<rect x="1207" y="1208" width="2" height="77" fill="#c4c4c4"/>
<rect x="1573" y="1208" width="2" height="77" fill="#c4c4c4"/>
<rect x="1810" y="1208" width="2" height="77" fill="#c4c4c4"/>
<rect x="2094" y="1208" width="2" height="77" fill="#c4c4c4"/>
<rect x="2479" y="1208" width="2" height="77" fill="#c4c4c4"/>
<path d="M591,1270 Q591,1284.5 605,1284.5 H2782.7 Q2796.7,1284.5 2796.7,1270" fill="none" stroke="#b5b5b5" stroke-width="1.6"/>
<text x="624.0" y="1255.6" font-size="28.6" fill="#4a86c8" textLength="257.0" lengthAdjust="spacingAndGlyphs" stroke="#4a86c8" stroke-width="0.45">Audience Overview</text>
<text x="948.5" y="1255.6" font-size="28.6" fill="#5a6e8c" textLength="226.0" lengthAdjust="spacingAndGlyphs" stroke="#5a6e8c" stroke-width="0.45">Smart Forecaster</text>
<text x="1242.0" y="1255.6" font-size="28.6" fill="#5a6e8c" textLength="297.7" lengthAdjust="spacingAndGlyphs" stroke="#5a6e8c" stroke-width="0.45">Audience Composition</text>
<text x="2118.0" y="1255.6" font-size="28.6" fill="#5a6e8c" textLength="329.0" lengthAdjust="spacingAndGlyphs" stroke="#5a6e8c" stroke-width="0.45">Marketing Code Tracker</text>
<g clip-path="url(#clipComp)">
<text x="2513.0" y="1255.6" font-size="28.6" fill="#5a6e8c" textLength="302.0" lengthAdjust="spacingAndGlyphs" stroke="#5a6e8c" stroke-width="0.45">Company Participation</text>
</g>
<g fill="#333"><circle cx="2773" cy="1246" r="1.8"/><circle cx="2781.5" cy="1246" r="1.8"/><circle cx="2790" cy="1246" r="1.8"/></g>
<rect x="1604" y="1223.5" width="526.4" height="66.5" rx="2" fill="#484b4f" stroke="#3a3c3f" stroke-width="1" filter="url(#sh)"/>
<text x="1616.8" y="1250.4" font-size="22.3" fill="#f2f2f2" textLength="496.8" lengthAdjust="spacingAndGlyphs" stroke="#f2f2f2" stroke-width="0.35">Teks Viler: Zmijsko gnijezdo (LIB 026) - Stripo...</text>
<text x="1617.0" y="1278.7" font-size="22.3" fill="#f2f2f2" textLength="465.0" lengthAdjust="spacingAndGlyphs" stroke="#f2f2f2" stroke-width="0.35">stripovizija.com/.../zmijsko-gnijezdo-lib-026/</text>
<path d="M2720,1073.8 H2765.8 Q2779.8,1073.8 2779.8,1087.8 V1133.6 A59.8,59.8 0 1 1 2720,1073.8 Z" fill="#6cbbe6" filter="url(#sh2)"/>
<path d="M2706,1118 H2736 Q2744,1118 2744,1126 V1142 Q2744,1152 2734,1152 H2698 V1126 Q2698,1118 2706,1118 Z" fill="#3c4a67"/>
<rect x="2706" y="1128" width="30" height="4" rx="2" fill="#6cbbe6"/><rect x="2706" y="1138" width="20" height="4" rx="2" fill="#6cbbe6"/>
<rect x="0" y="1280" width="2878" height="84" fill="url(#botg)" mask="url(#vmask)"/>
<path d="M0,1354 C3,1359 6,1362 9.5,1364 H0 Z" fill="#0d0d08"/>
<path d="M2878,1341 C2877.5,1351 2874,1358 2867,1364 H2878 Z" fill="#0d0d08"/>
<rect x="24" y="514" width="338" height="77.5" fill="none" stroke="#e53e26" stroke-width="5"/>
<path d="M625.3,476 L402,545" stroke="#e53e26" stroke-width="5.6" stroke-linecap="butt"/>
<path d="M380.5,551.6 L400.5,532 L407.9,556.4 Z" fill="#e53e26" stroke="#e53e26" stroke-width="1" stroke-linejoin="round"/>
</svg></body></html>
